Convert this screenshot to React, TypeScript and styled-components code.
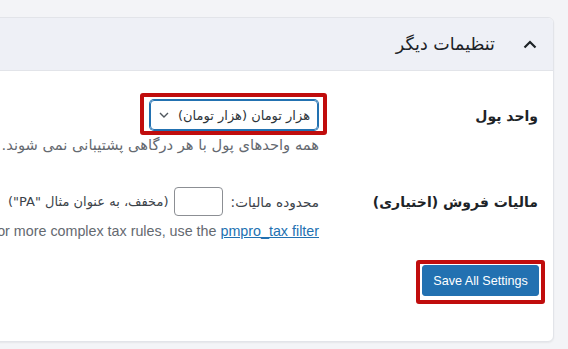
import React from "react";
import styled, { createGlobalStyle } from "styled-components";

const GlobalStyle = createGlobalStyle`
  html, body {
    margin: 0;
    padding: 0;
    background: #f3f4f7;
    overflow: hidden;
  }
  body {
    font-family: "DejaVu Sans", "Liberation Sans", sans-serif;
    color: #1d2327;
  }
`;

const Page = styled.div`
  direction: rtl;
  width: 568px;
  height: 349px;
  padding: 17px 14px 0 0;
  box-sizing: border-box;
`;

const Card = styled.section`
  width: 760px;
  height: 325px;
  box-sizing: border-box;
  background: #fff;
  border: 1px solid #e2e4e9;
  border-radius: 6px;
  box-shadow: 0 1px 2px rgba(0, 0, 0, 0.06);
  overflow: hidden;
`;

const CardHeader = styled.header`
  display: flex;
  align-items: center;
  gap: 28px;
  height: 52px;
  padding: 0 16px;
  background: #eef0f6;
  border-bottom: 1px solid #e2e4e9;
`;

const Title = styled.h2`
  margin: 0;
  font-size: 17.5px;
  font-weight: normal;
  color: #1d2327;
`;

const CardBody = styled.div`
  padding: 22px 15px 0 0;
`;

const Row = styled.div<{ $top: number }>`
  display: grid;
  grid-template-columns: 219px 1fr;
  align-items: start;
  margin-top: ${(p) => p.$top}px;
`;

const Label = styled.div<{ $pad: number }>`
  font-size: 14px;
  font-weight: bold;
  line-height: 16px;
  padding-top: ${(p) => p.$pad}px;
  white-space: nowrap;
`;

const Field = styled.div`
  display: flex;
  flex-direction: column;
  align-items: flex-start;
`;

const Highlight = styled.div<{ $pad: string; $shift: number }>`
  display: inline-flex;
  border: 4px solid #c00d0d;
  border-radius: 3px;
  padding: ${(p) => p.$pad};
  margin-right: ${(p) => p.$shift}px;
  background: #fff;
`;

const Select = styled.div`
  display: flex;
  align-items: center;
  justify-content: space-between;
  width: 168px;
  height: 30px;
  padding: 0 7px 0 8px;
  box-sizing: border-box;
  border: 1px solid #2271b1;
  box-shadow: 0 0 0 1px #2271b1;
  border-radius: 4px;
  font-size: 13px;
  color: #2c3338;
  white-space: nowrap;
`;

const Description = styled.p`
  margin: 1px 0 0;
  font-size: 14.7px;
  line-height: 17px;
  color: #646970;
  white-space: nowrap;
`;

const Inline = styled.div`
  display: flex;
  align-items: center;
  gap: 8px;
  font-size: 13.6px;
  color: #3c434a;
  white-space: nowrap;
`;

const Hint = styled.span`
  font-size: 13px;
  margin-right: -3px;
`;

const SmallInput = styled.span`
  display: inline-block;
  width: 47px;
  height: 27px;
  border: 1px solid #8c8f94;
  border-radius: 4px;
`;

const Note = styled.p`
  margin: 7px 0 0;
  font-family: "Liberation Sans", Arial, sans-serif;
  font-size: 14.3px;
  line-height: 16px;
  color: #646970;
  white-space: nowrap;

  a {
    color: #2271b1;
    text-decoration: underline;
  }
`;

const Actions = styled.div`
  display: flex;
  justify-content: flex-start;
  margin: 21px -7px 0 0;
`;

const Button = styled.button`
  width: 117px;
  height: 31px;
  padding: 0;
  border: 1px solid #2271b1;
  border-radius: 3px;
  background: #2271b1;
  color: #fff;
  font-family: "Liberation Sans", Arial, sans-serif;
  font-size: 12.6px;
  white-space: nowrap;
`;

const Chevron = () => (
  <svg width="14" height="9" viewBox="0 0 14 9" fill="none">
    <path d="M1.5 7.5 L7 2 L12.5 7.5" stroke="#1d2327" strokeWidth="2.2" />
  </svg>
);

const SelectArrow = () => (
  <svg width="10" height="6" viewBox="0 0 10 6" fill="none">
    <path d="M1 1 L5 5 L9 1" stroke="#50575e" strokeWidth="1.4" />
  </svg>
);

const App = (): React.ReactElement => (
  <Page>
    <GlobalStyle />
    <Card>
      <CardHeader>
        <Chevron />
        <Title>تنظیمات دیگر</Title>
      </CardHeader>
      <CardBody>
        <Row $top={0}>
          <Label $pad={15}>واحد پول</Label>
          <Field>
            <Highlight $pad="3px 5px 1px 6px" $shift={-8}>
              <Select>
                <span>هزار تومان (هزار تومان)</span>
                <SelectArrow />
              </Select>
            </Highlight>
            <Description>همه واحدهای پول با هر درگاهی پشتیبانی نمی شوند.</Description>
          </Field>
        </Row>
        <Row $top={34}>
          <Label $pad={7}>مالیات فروش (اختیاری)</Label>
          <Field>
            <Inline>
              <span>محدوده مالیات:</span>
              <SmallInput />
              <Hint>(مخفف، به عنوان مثال "PA")</Hint>
            </Inline>
            <Note dir="rtl">
              <bdi>
                For more complex tax rules, use the <a href="#">pmpro_tax filter</a>
              </bdi>
              .
            </Note>
          </Field>
        </Row>
        <Actions>
          <Highlight $pad="1px 2px 4px 2px" $shift={0}>
            <Button>Save All Settings</Button>
          </Highlight>
        </Actions>
      </CardBody>
    </Card>
  </Page>
);

export default App;
